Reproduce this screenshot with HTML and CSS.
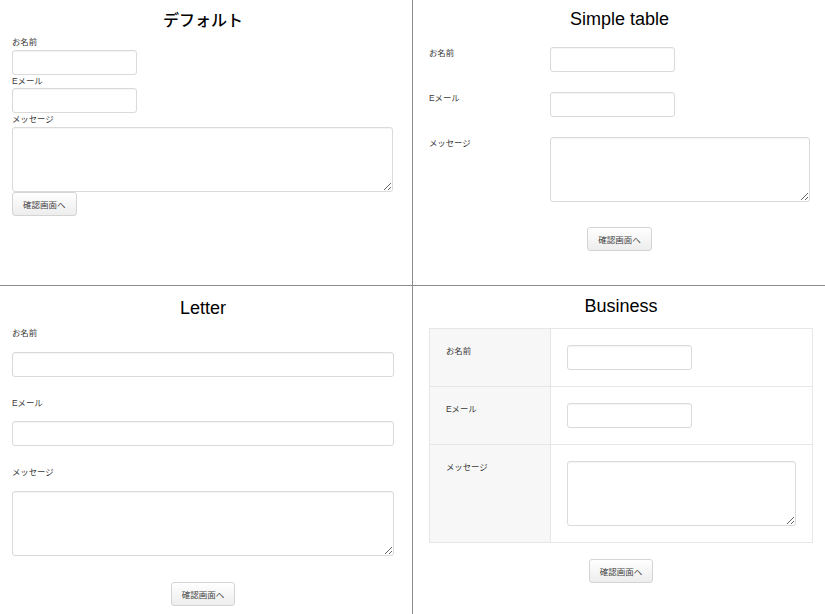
FILE: index.html
```html
<!DOCTYPE html>
<html lang="ja">
<head>
    <meta charset="UTF-8">
    <meta name="viewport" content="width=device-width, initial-scale=1.0">
    <title>Form styles</title>
    <link rel="stylesheet" href="styles.css">
</head>
<body>
    <div class="board">
        <!-- Default -->
        <section class="panel panel-default">
            <h2 class="panel-title panel-title-ja">デフォルト</h2>
            <form class="form-default">
                <label class="field-label">お名前</label>
                <input type="text" class="text-input">
                <label class="field-label">Eメール</label>
                <input type="text" class="text-input">
                <label class="field-label">メッセージ</label>
                <textarea class="text-area"></textarea>
                <button type="button" class="confirm-btn">確認画面へ</button>
            </form>
        </section>

        <!-- Simple table -->
        <section class="panel panel-simple">
            <h2 class="panel-title">Simple table</h2>
            <form class="form-simple">
                <div class="simple-grid">
                    <label class="field-label">お名前</label>
                    <input type="text" class="text-input">
                    <label class="field-label">Eメール</label>
                    <input type="text" class="text-input">
                    <label class="field-label">メッセージ</label>
                    <textarea class="text-area"></textarea>
                </div>
                <div class="btn-row btn-row-simple">
                    <button type="button" class="confirm-btn">確認画面へ</button>
                </div>
            </form>
        </section>

        <!-- Letter -->
        <section class="panel panel-letter">
            <h2 class="panel-title">Letter</h2>
            <form class="form-letter">
                <div class="letter-field">
                    <label class="field-label">お名前</label>
                    <input type="text" class="text-input">
                </div>
                <div class="letter-field">
                    <label class="field-label">Eメール</label>
                    <input type="text" class="text-input">
                </div>
                <div class="letter-field">
                    <label class="field-label">メッセージ</label>
                    <textarea class="text-area"></textarea>
                </div>
                <div class="btn-row btn-row-letter">
                    <button type="button" class="confirm-btn">確認画面へ</button>
                </div>
            </form>
        </section>

        <!-- Business -->
        <section class="panel panel-business">
            <h2 class="panel-title">Business</h2>
            <form class="form-business">
                <table class="biz-table">
                    <tr>
                        <th><label class="field-label">お名前</label></th>
                        <td><input type="text" class="text-input"></td>
                    </tr>
                    <tr>
                        <th><label class="field-label">Eメール</label></th>
                        <td><input type="text" class="text-input"></td>
                    </tr>
                    <tr>
                        <th><label class="field-label">メッセージ</label></th>
                        <td><textarea class="text-area"></textarea></td>
                    </tr>
                </table>
                <div class="btn-row btn-row-business">
                    <button type="button" class="confirm-btn">確認画面へ</button>
                </div>
            </form>
        </section>
    </div>
</body>
</html>
```

FILE: styles.css
```css
body {
    margin: 0;
    padding: 0;
    font-family: "Liberation Sans", "Noto Sans CJK JP", sans-serif;
    background: #fff;
    color: #333;
}
.board {
    display: grid;
    grid-template-columns: 413px 1fr;
    grid-template-rows: 286px 1fr;
    height: 614px;
}
.panel {
    box-sizing: border-box;
    overflow: hidden;
}
.panel-default,
.panel-letter {
    border-right: 1px solid #8c8c8c;
}
.panel-default,
.panel-simple {
    border-bottom: 1px solid #8c8c8c;
}
.panel-default {
    padding: 8px 18px 0 12px;
}
.panel-simple {
    padding: 8px 15px 0 16px;
}
.panel-letter {
    padding: 11px 18px 0 12px;
}
.panel-business {
    padding: 9px 12px 0 16px;
}
.panel-title {
    margin: 0 0 6px;
    font-size: 18px;
    line-height: 22px;
    font-weight: normal;
    text-align: center;
    color: #000;
}
.panel-title-ja {
    font-size: 16px;
    margin-top: 2px;
    margin-bottom: 4px;
    font-weight: 500;
}
.field-label {
    display: block;
    font-size: 8.4px;
    line-height: 13.6px;
    color: #383838;
}
.text-input {
    display: block;
    box-sizing: border-box;
    width: 125px;
    height: 25px;
    margin: 0;
    border: 1px solid #dadada;
    border-radius: 3px;
    box-shadow: inset 0 1px 1px rgba(0, 0, 0, 0.04);
    background: #fff;
}
.text-area {
    display: block;
    box-sizing: border-box;
    width: 100%;
    height: 65px;
    margin: 0;
    border: 1px solid #dadada;
    border-radius: 3px;
    box-shadow: inset 0 1px 1px rgba(0, 0, 0, 0.04);
    background: #fff;
}
.confirm-btn {
    display: block;
    box-sizing: border-box;
    height: 24px;
    padding: 0 10px;
    margin: 0;
    font-family: "Liberation Sans", "Noto Sans CJK JP", sans-serif;
    font-size: 8.5px;
    color: #444;
    background: linear-gradient(#ffffff, #ededed);
    border: 1px solid #d4d4d4;
    border-radius: 3px;
    cursor: pointer;
}
.form-default .text-area {
    width: 381px;
}
.btn-row {
    display: flex;
    justify-content: center;
}

/* Simple table */
.form-simple {
    padding-top: 11px;
}
.simple-grid {
    display: grid;
    grid-template-columns: 121px 1fr;
    row-gap: 20px;
}
.btn-row-simple {
    margin-top: 25px;
}

/* Letter */
.form-letter {
    padding-top: 2px;
}
.letter-field {
    margin-bottom: 20px;
}
.letter-field .field-label {
    margin-bottom: 11px;
}
.letter-field .text-input {
    width: 100%;
}
.btn-row-letter {
    margin-top: 26px;
}

/* Business */
.form-business {
    padding-top: 5px;
}
.biz-table {
    width: 100%;
    border-collapse: collapse;
    border: 1px solid #e6e6e6;
}
.biz-table th,
.biz-table td {
    padding: 16px;
    border-bottom: 1px solid #e6e6e6;
    vertical-align: top;
    text-align: left;
    font-weight: normal;
}
.biz-table th {
    width: 88px;
    background: #f7f7f7;
    border-right: 1px solid #e6e6e6;
}
.btn-row-business {
    margin-top: 16px;
}
```
